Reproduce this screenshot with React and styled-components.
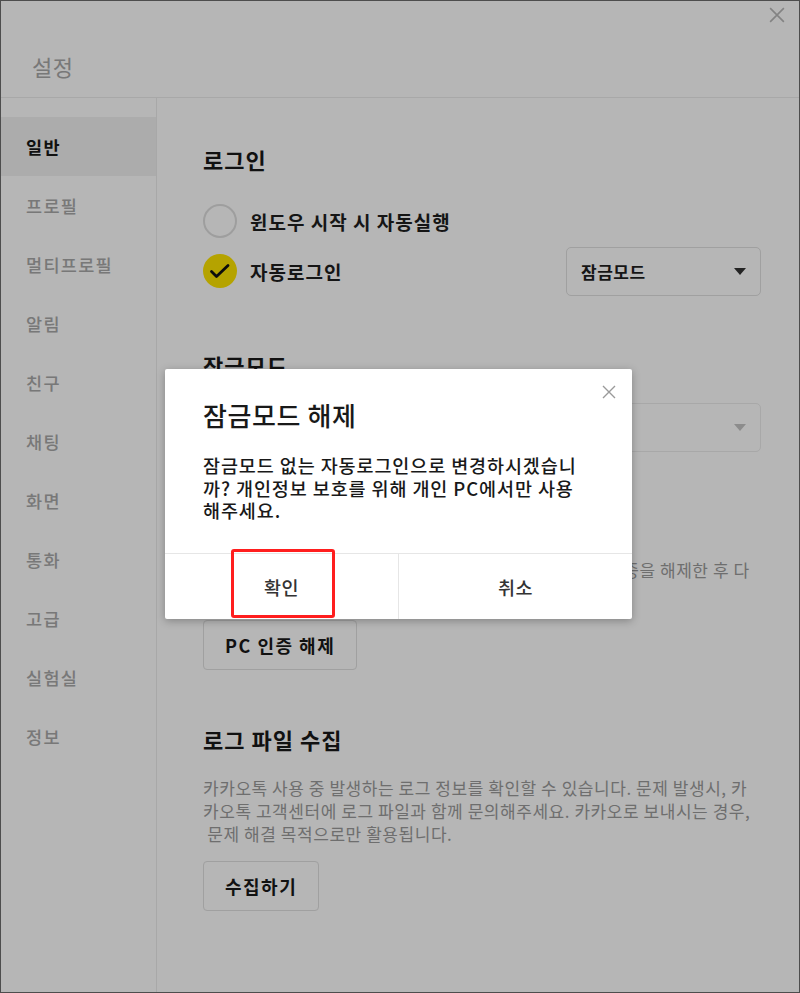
import React from 'react';
import styled, {createGlobalStyle} from 'styled-components';

const Global = createGlobalStyle`
  html, body {
    margin: 0;
    padding: 0;
    background: #fff;
  }
  body {
    font-family: "Noto Sans CJK KR", "Noto Sans", sans-serif;
    color: #191919;
  }
  * { box-sizing: border-box; }
`;

const Window = styled.div`
  position: relative;
  width: 800px;
  height: 993px;
  border: 1px solid #4d4d4d;
  background: #fff;
  display: flex;
  flex-direction: column;
  overflow: hidden;
`;

const Header = styled.div`
  height: 97px;
  flex-shrink: 0;
  border-bottom: 1px solid #ececec;
  display: flex;
  justify-content: space-between;
  padding: 6px 14px 0 31px;
`;

const Title = styled.h1`
  align-self: flex-end;
  margin: 0 0 16px;
  font-size: 22px;
  line-height: 30px;
  letter-spacing: 0.5px;
  font-weight: 400;
  color: #a8a8a8;
`;

const CloseButton = styled.button`
  align-self: flex-start;
  width: ${p => p.$size}px;
  height: ${p => p.$size}px;
  padding: 0;
  border: none;
  background: none;
  display: flex;
  color: ${p => p.$color};
`;

const Body = styled.div`
  flex: 1;
  display: flex;
  min-height: 0;
`;

const Sidebar = styled.nav`
  width: 156px;
  flex-shrink: 0;
  border-right: 1px solid #ececec;
  padding-top: 19px;
`;

const SideItem = styled.div`
  height: 59px;
  display: flex;
  align-items: center;
  padding-left: 25px;
  font-size: 17.5px;
  letter-spacing: 1.3px;
  font-weight: ${p => (p.$active ? 700 : 500)};
  color: ${p => (p.$active ? '#191919' : '#a9a9a9')};
  background: ${p => (p.$active ? '#f2f2f2' : 'transparent')};
`;

const Main = styled.main`
  flex: 1;
  padding: 46px 38px 0 46px;
`;

const Section = styled.section`
  margin-bottom: 54px;
`;

const Heading = styled.h2`
  margin: 0 0 22px;
  font-size: 22px;
  line-height: 30px;
  letter-spacing: 1px;
  font-weight: 700;
  color: #191919;
`;

const Row = styled.div`
  height: 50px;
  display: flex;
  align-items: center;
  gap: 13px;
`;

const Check = styled.span`
  width: 34px;
  height: 34px;
  border-radius: 50%;
  flex-shrink: 0;
  display: flex;
  align-items: center;
  justify-content: center;
  background: ${p => (p.$checked ? '#fee500' : '#fff')};
  border: ${p => (p.$checked ? 'none' : '2px solid #dedede')};
`;

const Label = styled.span`
  font-size: 19px;
  letter-spacing: 1px;
  font-weight: 700;
  color: #1e1e1e;
`;

const Select = styled.div`
  margin-left: auto;
  width: 195px;
  height: 49px;
  border: 1px solid ${p => (p.$disabled ? '#ececec' : '#e0e0e0')};
  border-radius: 5px;
  padding: 0 14px;
  display: flex;
  align-items: center;
  justify-content: space-between;
  font-size: 17px;
  letter-spacing: 0.5px;
  font-weight: 700;
  color: ${p => (p.$disabled ? '#c8c8c8' : '#1e1e1e')};
`;

const Arrow = styled.span`
  width: 0;
  height: 0;
  border-left: 6.5px solid transparent;
  border-right: 6.5px solid transparent;
  border-top: 7px solid ${p => (p.$disabled ? '#c4c4c4' : '#333')};
`;

const Desc = styled.p`
  margin: 0 0 16px;
  font-size: 17px;
  line-height: 23px;
  letter-spacing: 0.55px;
  color: #9b9b9b;
  white-space: nowrap;

  span {
    display: block;
  }
`;

const Button = styled.button`
  height: 50px;
  padding: 0 21px;
  border: 1px solid #e0e0e0;
  border-radius: 4px;
  background: #fff;
  font-family: inherit;
  font-size: 18px;
  letter-spacing: 1.5px;
  font-weight: 700;
  color: #191919;
`;

const Overlay = styled.div`
  position: absolute;
  inset: 0;
  background: rgba(0, 0, 0, 0.286);
  display: flex;
  align-items: center;
  justify-content: center;
  padding: 0 3px 5px 0;
`;

const Modal = styled.div`
  position: relative;
  width: 467px;
  height: 250px;
  background: #fff;
  border-radius: 2px;
  box-shadow: 0 2px 8px rgba(0, 0, 0, 0.28);
  display: flex;
  flex-direction: column;
`;

const ModalClose = styled(CloseButton)`
  position: absolute;
  top: 16px;
  right: 16px;
`;

const ModalBody = styled.div`
  flex: 1;
  padding: 29px 38px 0;
`;

const ModalTitle = styled.h3`
  margin: 0 0 22px;
  font-size: 26px;
  line-height: 34px;
  letter-spacing: 0.6px;
  font-weight: 500;
  color: #191919;
`;

const ModalText = styled.p`
  margin: 0;
  font-size: 18.5px;
  line-height: 22.5px;
  letter-spacing: 0.9px;
  font-weight: 500;
  color: #191919;
  white-space: nowrap;

  span {
    display: block;
  }
`;

const Footer = styled.div`
  height: 66px;
  flex-shrink: 0;
  border-top: 1px solid #e6e6e6;
  display: flex;
`;

const FooterButton = styled.button`
  position: relative;
  flex: 1;
  border: none;
  border-left: ${p => (p.$divider ? '1px solid #e6e6e6' : 'none')};
  background: none;
  font-family: inherit;
  font-size: 18.5px;
  letter-spacing: 0.5px;
  font-weight: 500;
  color: #333;
`;

const Highlight = styled.span`
  position: absolute;
  left: 66px;
  top: -5px;
  width: 104px;
  height: 69px;
  border: 3px solid #ff1e1e;
  border-radius: 3px;
  pointer-events: none;
`;

const XIcon = ({size}) => (
  <svg width={size} height={size} viewBox="0 0 14 14" fill="none">
    <path d="M1 1L13 13M13 1L1 13" stroke="currentColor" strokeWidth="1.4" />
  </svg>
);

const CheckMark = () => (
  <svg width="34" height="34" viewBox="0 0 34 34" fill="none">
    <path d="M8.5 17.5L13.5 22.5L25 11.5" stroke="#111" strokeWidth="2.8" strokeLinecap="round" strokeLinejoin="round" />
  </svg>
);

const menu = ['일반', '프로필', '멀티프로필', '알림', '친구', '채팅', '화면', '통화', '고급', '실험실', '정보'];

export default function App() {
  return (
    <>
      <Global />
      <Window>
        <Header>
          <Title>설정</Title>
          <CloseButton $size={16} $color="#b8b8b8"><XIcon size={16} /></CloseButton>
        </Header>
        <Body>
          <Sidebar>
            {menu.map((m, i) => (
              <SideItem key={m} $active={i === 0}>{m}</SideItem>
            ))}
          </Sidebar>
          <Main>
            <Section>
              <Heading>로그인</Heading>
              <Row>
                <Check />
                <Label>윈도우 시작 시 자동실행</Label>
              </Row>
              <Row>
                <Check $checked><CheckMark /></Check>
                <Label>자동로그인</Label>
                <Select>잠금모드<Arrow /></Select>
              </Row>
            </Section>
            <Section>
              <Heading>잠금모드</Heading>
              <Row>
                <Check />
                <Label>잠금모드 사용</Label>
                <Select $disabled>1분<Arrow $disabled /></Select>
              </Row>
            </Section>
            <Section>
              <Heading>PC 인증</Heading>
              <Desc>
                <span>다른 PC에서 로그인하려면, 지금 사용 중인 이 PC의 PC 인증을 해제한 후 다</span>
                <span>시 로그인해주세요.</span>
              </Desc>
              <Button>PC 인증 해제</Button>
            </Section>
            <Section>
              <Heading>로그 파일 수집</Heading>
              <Desc>
                <span>카카오톡 사용 중 발생하는 로그 정보를 확인할 수 있습니다. 문제 발생시, 카</span>
                <span>카오톡 고객센터에 로그 파일과 함께 문의해주세요. 카카오로 보내시는 경우,</span>
                <span>&nbsp;문제 해결 목적으로만 활용됩니다.</span>
              </Desc>
              <Button>수집하기</Button>
            </Section>
          </Main>
        </Body>
        <Overlay>
          <Modal>
            <ModalClose $size={14} $color="#9a9a9a"><XIcon size={14} /></ModalClose>
            <ModalBody>
              <ModalTitle>잠금모드 해제</ModalTitle>
              <ModalText>
                <span>잠금모드 없는 자동로그인으로 변경하시겠습니</span>
                <span>까? 개인정보 보호를 위해 개인 PC에서만 사용</span>
                <span>해주세요.</span>
              </ModalText>
            </ModalBody>
            <Footer>
              <FooterButton>
                확인
                <Highlight />
              </FooterButton>
              <FooterButton $divider>취소</FooterButton>
            </Footer>
          </Modal>
        </Overlay>
      </Window>
    </>
  );
}
